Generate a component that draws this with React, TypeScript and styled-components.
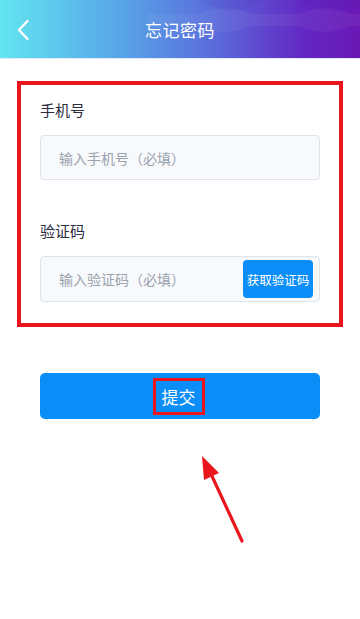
import React from "react";
import styled, { createGlobalStyle } from "styled-components";

const GlobalStyle = createGlobalStyle`
  html, body {
    margin: 0;
    padding: 0;
    background: #ffffff;
    font-family: "Noto Sans CJK SC", "Noto Sans", sans-serif;
  }
  * {
    box-sizing: border-box;
  }
`;

const Page = styled.div`
  position: relative;
  width: 360px;
  min-height: 619px;
  background: #ffffff;
`;

const Header = styled.header`
  position: relative;
  height: 59px;
  display: flex;
  align-items: center;
  justify-content: center;
  overflow: hidden;
  background: linear-gradient(90deg, #62e5f1 0%, #58a6e8 33%, #5a6fdc 58%, #6326c2 85%, #6a18b4 100%);
  border-bottom: 1px solid #dfeafb;

  & .deco {
    position: absolute;
    inset: 0;
  }
`;

const BackButton = styled.button`
  position: absolute;
  left: 12px;
  top: 18px;
  width: 22px;
  height: 24px;
  padding: 0;
  border: none;
  background: none;
  display: flex;
  align-items: center;
  justify-content: center;
`;

const Title = styled.h1`
  position: relative;
  margin: 0;
  font-size: 17px;
  font-weight: 400;
  color: #ffffff;
  letter-spacing: 0.5px;
`;

const FormCard = styled.section`
  margin: 22px 17px 0;
  padding: 15px 19px 21px;
  border: 4px solid #ea161e;
  display: flex;
  flex-direction: column;
`;

const Label = styled.div<{ $gap?: number }>`
  margin-top: ${(p) => p.$gap ?? 0}px;
  font-size: 15px;
  line-height: 20px;
  color: #2b2c3e;
`;

const Field = styled.div<{ $h: number }>`
  margin-top: 15px;
  height: ${(p) => p.$h}px;
  display: flex;
  align-items: center;
  padding: 0 6px 0 16px;
  background: #f7f9fb;
  border: 1px solid #dde4ee;
  border-radius: 4px;
`;

const Input = styled.input`
  flex: 1;
  min-width: 0;
  border: none;
  outline: none;
  background: transparent;
  font-family: inherit;
  font-size: 14px;
  color: #333;
  &::placeholder {
    color: #9aa2ae;
  }
`;

const CodeButton = styled.button`
  width: 70px;
  height: 38px;
  padding: 0;
  border: none;
  border-radius: 4px;
  background: #0b8ef8;
  color: #ffffff;
  font-family: inherit;
  font-size: 12.5px;
`;

const SubmitButton = styled.button`
  display: flex;
  align-items: center;
  justify-content: center;
  margin: 46px 40px 0;
  width: 280px;
  height: 46px;
  padding: 0;
  border: none;
  border-radius: 5px;
  background: #0b8ef8;
  color: #ffffff;
  font-family: inherit;
`;

const Highlight = styled.span`
  padding: 3px 6px;
  border: 3px solid #ea161e;
  font-size: 17px;
  line-height: 25px;
  margin-right: 3px;
`;

const Annotation = styled.svg`
  position: absolute;
  left: 0;
  top: 0;
  pointer-events: none;
`;

export default function App() {
  return (
    <Page>
      <GlobalStyle />
      <Header>
        <svg className="deco" width="360" height="59" viewBox="0 0 360 59">
          <path
            d="M148 14 L200 14 Q225 2 250 14 L300 14 Q325 2 350 14 L360 14 L360 26 L350 26 Q325 38 300 26 L250 26 Q225 38 200 26 L148 26 Z"
            fill="#ffffff"
            opacity="0.05"
          />
          <path
            d="M200 0 Q232 22 262 0 Z M300 0 Q332 20 360 4 L360 0 Z"
            fill="#3a1aa0"
            opacity="0.08"
          />
        </svg>
        <BackButton aria-label="返回">
          <svg width="14" height="22" viewBox="0 0 14 22">
            <path d="M11.5 2 L3 11 L11.5 20" fill="none" stroke="#ffffff" strokeWidth="2.4" strokeLinecap="round" strokeLinejoin="round" />
          </svg>
        </BackButton>
        <Title>忘记密码</Title>
      </Header>

      <FormCard>
        <Label>手机号</Label>
        <Field $h={45}>
          <Input placeholder="输入手机号（必填）" />
        </Field>
        <Label $gap={41}>验证码</Label>
        <Field $h={46}>
          <Input placeholder="输入验证码（必填）" />
          <CodeButton>获取验证码</CodeButton>
        </Field>
      </FormCard>

      <SubmitButton>
        <Highlight>提交</Highlight>
      </SubmitButton>

      <Annotation width="360" height="619" viewBox="0 0 360 619">
        <line x1="242" y1="541" x2="211" y2="474" stroke="#ea161e" strokeWidth="3.2" strokeLinecap="round" />
        <polygon points="202,456 219,473 204,480" fill="#ea161e" />
      </Annotation>
    </Page>
  );
}
